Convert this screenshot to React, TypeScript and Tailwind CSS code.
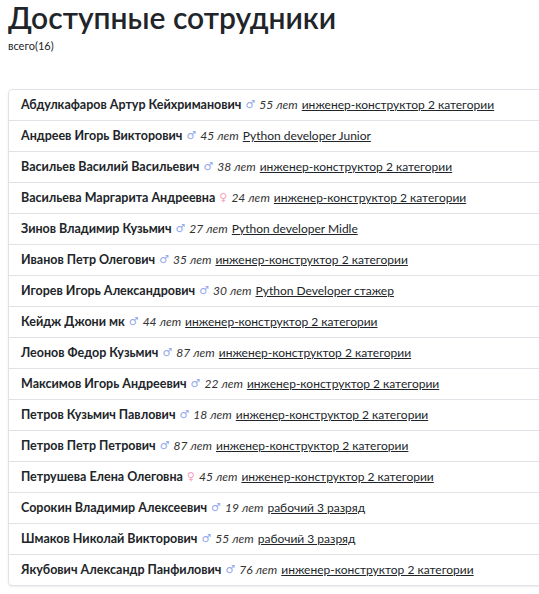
const employees = [
  { name: "Абдулкафаров Артур Кейхриманович", male: true, age: 55, post: "инженер-конструктор 2 категории" },
  { name: "Андреев Игорь Викторович", male: true, age: 45, post: "Python developer Junior" },
  { name: "Васильев Василий Васильевич", male: true, age: 38, post: "инженер-конструктор 2 категории" },
  { name: "Васильева Маргарита Андреевна", male: false, age: 24, post: "инженер-конструктор 2 категории" },
  { name: "Зинов Владимир Кузьмич", male: true, age: 27, post: "Python developer Midle" },
  { name: "Иванов Петр Олегович", male: true, age: 35, post: "инженер-конструктор 2 категории" },
  { name: "Игорев Игорь Александрович", male: true, age: 30, post: "Python Developer стажер" },
  { name: "Кейдж Джони мк", male: true, age: 44, post: "инженер-конструктор 2 категории" },
  { name: "Леонов Федор Кузьмич", male: true, age: 87, post: "инженер-конструктор 2 категории" },
  { name: "Максимов Игорь Андреевич", male: true, age: 22, post: "инженер-конструктор 2 категории" },
  { name: "Петров Кузьмич Павлович", male: true, age: 18, post: "инженер-конструктор 2 категории" },
  { name: "Петров Петр Петрович", male: true, age: 87, post: "инженер-конструктор 2 категории" },
  { name: "Петрушева Елена Олеговна", male: false, age: 45, post: "инженер-конструктор 2 категории" },
  { name: "Сорокин Владимир Алексеевич", male: true, age: 19, post: "рабочий 3 разряд" },
  { name: "Шмаков Николай Викторович", male: true, age: 55, post: "рабочий 3 разряд" },
  { name: "Якубович Александр Панфилович", male: true, age: 76, post: "инженер-конструктор 2 категории" },
];

export default function App() {
  return (
    <div className="w-[539px] h-[594px] overflow-hidden bg-white px-2 text-[#212529] font-['Lato',sans-serif]">
      <h1 className="text-[30px] leading-[34px] font-semibold whitespace-nowrap">
        Доступные сотрудники
      </h1>
      <p className="mt-[5px] text-[11px] leading-[14px]">всего(16)</p>
      <ul className="mt-[36px] w-[560px] rounded border border-[#dfe2e6] shadow-[0_1px_2px_rgba(0,0,0,0.08)]">
        {employees.map((e, i) => (
          <li
            key={e.name}
            className={
              "flex h-[30px] items-center gap-[4px] px-3 text-[12px] whitespace-nowrap " +
              (i > 0 ? "border-t border-[#dfe2e6] h-[31px]" : "")
            }
          >
            <span className="font-bold text-[12.5px]">{e.name}</span>
            {e.male ? (
              <span className="text-[#92a8ea] text-[11px] font-['DejaVu_Sans',sans-serif]">♂</span>
            ) : (
              <span className="text-[#f5a5c0] text-[11px] font-['DejaVu_Sans',sans-serif]">♀</span>
            )}
            <span className="italic text-[#333]">{e.age} лет</span>
            <a href="#" className="underline text-[#212529]">{e.post}</a>
          </li>
        ))}
      </ul>
    </div>
  );
}
